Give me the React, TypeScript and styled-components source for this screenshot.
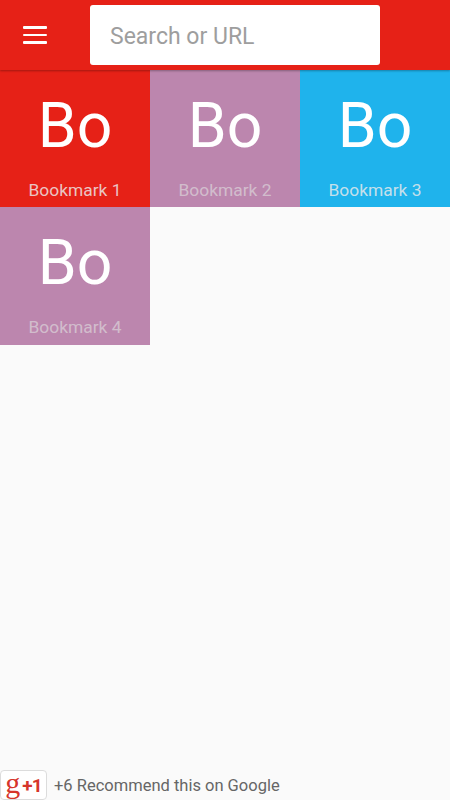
import React, { FunctionComponent } from 'react';
import styled, { createGlobalStyle } from 'styled-components';

const GlobalStyle = createGlobalStyle`
    html, body {
        margin: 0;
        padding: 0;
        background: #fafafa;
    }
    * {
        box-sizing: border-box;
    }
`;

const Page = styled.div`
    width: 450px;
    height: 800px;
    display: flex;
    flex-direction: column;
    overflow: hidden;
    background: #fafafa;
    font-family: Roboto, "Liberation Sans", sans-serif;
`;

const Toolbar = styled.header`
    position: relative;
    z-index: 1;
    height: 70px;
    flex-shrink: 0;
    display: flex;
    align-items: center;
    padding: 0 70px 0 23px;
    background: #e62117;
    box-shadow: 0 1px 2px rgba(0, 0, 0, 0.3);
`;

const MenuButton = styled.div`
    width: 24px;
    display: flex;
    flex-direction: column;
    gap: 5px;
    margin-right: 43px;
`;

const MenuLine = styled.span`
    height: 2.6px;
    background: #fff;
    border-radius: 1px;
`;

const SearchBox = styled.div`
    flex: 1;
    height: 60px;
    display: flex;
    align-items: center;
    padding: 2px 0 0 20px;
    border-radius: 3px;
    background: #fff;
    color: #9e9e9e;
    font-size: 23px;
`;

const Grid = styled.main`
    flex: 1;
    display: grid;
    grid-template-columns: repeat(3, 150px);
    grid-auto-rows: 137.4px;
`;

const Tile = styled.div<{ $color: string }>`
    display: flex;
    flex-direction: column;
    align-items: center;
    background: ${({ $color }) => $color};
`;

const Initials = styled.div`
    margin-top: 11px;
    height: 90px;
    line-height: 90px;
    color: #fff;
    font-size: 62.5px;
`;

const Label = styled.div<{ $dim: boolean }>`
    margin-top: 7px;
    color: ${({ $dim }) => ($dim ? 'rgba(225, 225, 225, 0.62)' : 'rgba(235, 235, 235, 0.82)')};
    font-size: 17.4px;
    line-height: 24px;
`;

const Footer = styled.footer`
    height: 30px;
    flex-shrink: 0;
    display: flex;
    align-items: center;
    color: #666;
    font-size: 16.5px;
`;

const PlusButton = styled.div`
    width: 47px;
    height: 30px;
    display: flex;
    align-items: center;
    justify-content: center;
    gap: 2px;
    margin-right: 7px;
    border: 1px solid #dcdcdc;
    border-radius: 4px;
    background: #fff;
    color: #d6352b;
`;

const PlusG = styled.span`
    font-family: "Liberation Serif", serif;
    font-size: 30px;
    line-height: 24px;
    margin-top: -5px;
`;

const PlusOne = styled.span`
    font-size: 19px;
    font-weight: 700;
    letter-spacing: -1px;
`;

const bookmarks = [
    { label: 'Bookmark 1', color: '#e62117', dim: false },
    { label: 'Bookmark 2', color: '#bc86ae', dim: true },
    { label: 'Bookmark 3', color: '#1fb3ec', dim: false },
    { label: 'Bookmark 4', color: '#bc86ae', dim: true },
];

const App: FunctionComponent = () => {
    return (
        <Page>
            <GlobalStyle />
            <Toolbar>
                <MenuButton>
                    <MenuLine />
                    <MenuLine />
                    <MenuLine />
                </MenuButton>
                <SearchBox>Search or URL</SearchBox>
            </Toolbar>

            <Grid>
                {bookmarks.map(bookmark => (
                    <Tile key={bookmark.label} $color={bookmark.color}>
                        <Initials>Bo</Initials>
                        <Label $dim={bookmark.dim}>{bookmark.label}</Label>
                    </Tile>
                ))}
            </Grid>

            <Footer>
                <PlusButton>
                    <PlusG>g</PlusG>
                    <PlusOne>+1</PlusOne>
                </PlusButton>
                +6 Recommend this on Google
            </Footer>
        </Page>
    )
};

export default App;
